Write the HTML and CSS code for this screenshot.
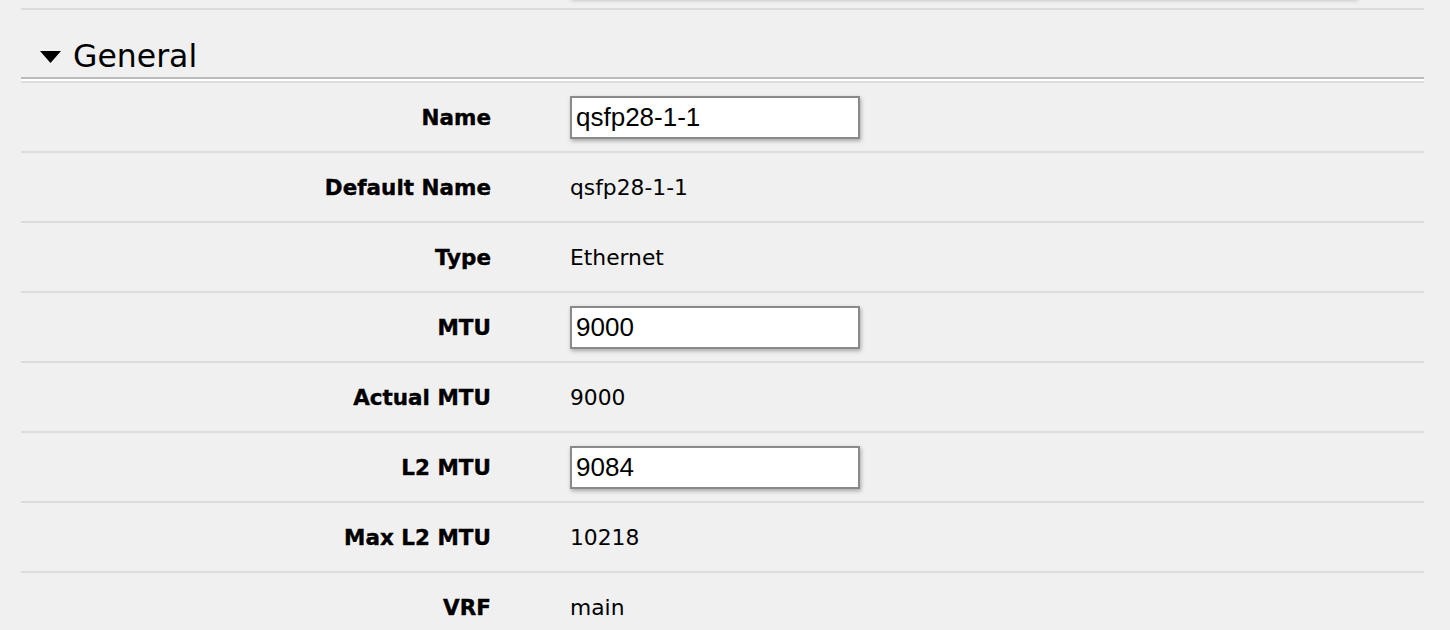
FILE: index.html
```html
<!DOCTYPE html>
<html>
<head>
<meta charset="utf-8">
<link rel="stylesheet" href="styles.css">
</head>
<body>
<div class="page">
  <div class="prev-row"><div class="prev-textarea"></div></div>
  <div class="section">
    <div class="section-head">
      <svg class="caret" width="21" height="12" viewBox="0 0 21 12"><polygon points="0,0 21,0 10.5,12" fill="#000"/></svg>
      <span class="section-title">General</span>
    </div>
    <div class="rows">
      <div class="row"><div class="label">Name</div><div class="value"><input class="field" type="text" value="qsfp28-1-1"></div></div>
      <div class="row"><div class="label">Default Name</div><div class="value">qsfp28-1-1</div></div>
      <div class="row"><div class="label">Type</div><div class="value">Ethernet</div></div>
      <div class="row"><div class="label">MTU</div><div class="value"><input class="field" type="text" value="9000"></div></div>
      <div class="row"><div class="label">Actual MTU</div><div class="value">9000</div></div>
      <div class="row"><div class="label">L2 MTU</div><div class="value"><input class="field" type="text" value="9084"></div></div>
      <div class="row"><div class="label">Max L2 MTU</div><div class="value">10218</div></div>
      <div class="row"><div class="label">VRF</div><div class="value">main</div></div>
    </div>
  </div>
</div>
</body>
</html>
```
FILE: styles.css
```css
html, body {
  margin: 0;
  padding: 0;
  background: #f0f0f0;
  overflow: hidden;
}
.page {
  margin-left: 21px;
  width: 1403px;
  font-family: "DejaVu Sans", Verdana, sans-serif;
  color: #000;
}
.prev-row {
  display: flow-root;
  height: 8px;
}
.prev-textarea {
  margin-left: 549px;
  width: 787px;
  height: 20px;
  margin-top: -21px;
  background: #f0f0f0;
  box-shadow: 1px 1px 4px rgba(0, 0, 0, 0.25);
}
.section {
  border-top: 2px solid #dcdcdc;
}
.section-head {
  display: flex;
  align-items: center;
  padding: 28px 0 3px 19px;
  height: 36px;
  border-bottom: 2px solid #bbbbbb;
}
.caret {
  display: block;
  margin-right: 12px;
  margin-top: 2px;
}
.section-title {
  font-size: 31.5px;
  line-height: 36px;
  color: #000;
}
.rows {
  border-top: 2px solid #ffffff;
}
.row {
  display: grid;
  grid-template-columns: 470px 1fr;
  column-gap: 79px;
  align-items: center;
  height: 68px;
  border-top: 2px solid #dcdcdc;
}
.label {
  text-align: right;
  font-weight: bold;
  font-size: 21.5px;
  -webkit-text-stroke: 0.4px #000;
  text-shadow: 1px 1px 0 #fff;
}
.value {
  font-size: 21.8px;
  display: flex;
  align-items: center;
}
.field {
  box-sizing: border-box;
  width: 290px;
  height: 43px;
  margin: 1px 0 0 0;
  padding: 0 4px;
  border: 2px solid #8a8a8a;
  background: #fff;
  font-family: "Liberation Sans", Arial, sans-serif;
  font-size: 26px;
  color: #000;
  box-shadow: 1px 2px 4px rgba(0, 0, 0, 0.3);
  outline: none;
}
```
